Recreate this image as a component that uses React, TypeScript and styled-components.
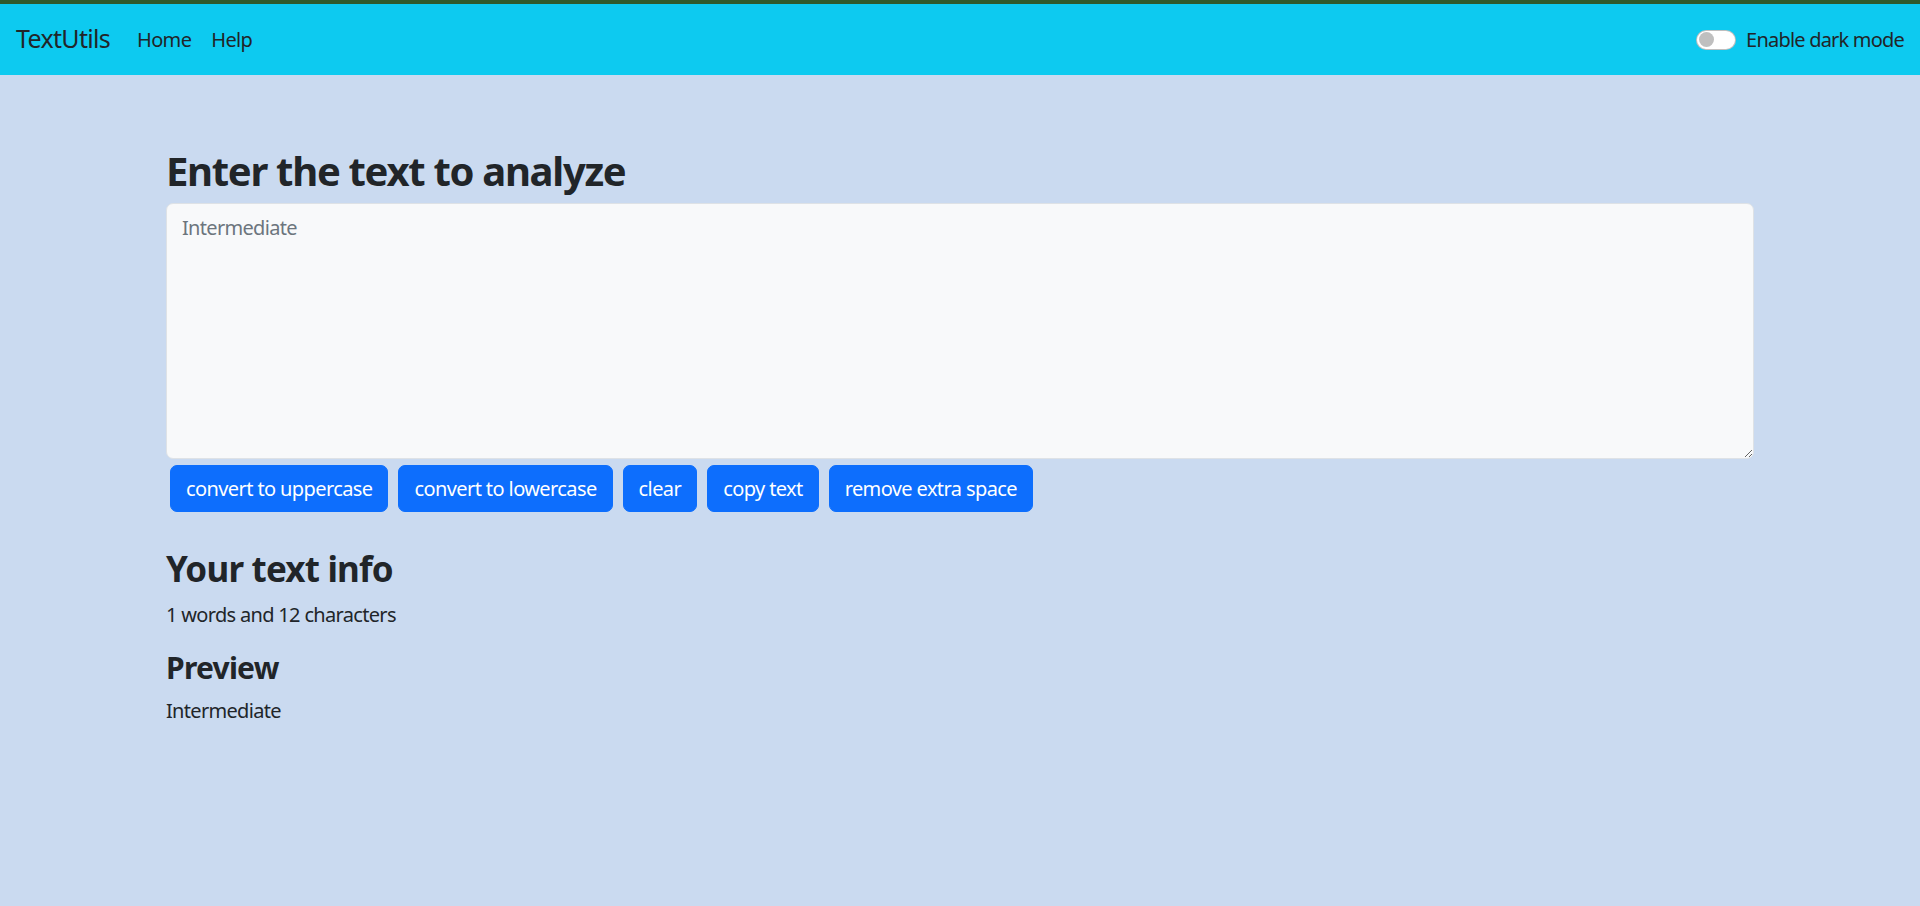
import React, { useState } from 'react';
import styled, { createGlobalStyle } from 'styled-components';

const GlobalStyle = createGlobalStyle`
  html, body {
    margin: 0;
    padding: 0;
  }

  body {
    background-color: #cadaf0;
    color: #212529;
    font-family: 'Noto Sans', 'Open Sans', sans-serif;
    font-size: 20px;
    line-height: 1.5;
    letter-spacing: -0.68px;
    min-height: 906px;
  }

  * {
    box-sizing: border-box;
  }
`;

const actions = [
  'convert to uppercase',
  'convert to lowercase',
  'clear',
  'copy text',
  'remove extra space',
];

const App: React.FC = () => {
  const [text, setText] = useState('Intermediate');
  const words = text.split(/\s+/).filter((w) => w.length > 0).length;

  return (
    <>
      <GlobalStyle />
      <TopStrip />
      <Navbar>
        <Brand href="#">TextUtils</Brand>
        <NavLinks>
          <NavLink href="#">Home</NavLink>
          <NavLink href="#">Help</NavLink>
        </NavLinks>
        <Switch>
          <SwitchTrack>
            <SwitchKnob />
          </SwitchTrack>
          <SwitchLabel>Enable dark mode</SwitchLabel>
        </Switch>
      </Navbar>

      <Container>
        <Title>Enter the text to analyze</Title>
        <TextBox
          rows={8}
          value={text}
          onChange={(e) => setText(e.target.value)}
        />
        <ButtonRow>
          {actions.map((label) => (
            <ActionButton key={label}>{label}</ActionButton>
          ))}
        </ButtonRow>

        <Summary>
          <SubTitle>Your text info</SubTitle>
          <Paragraph>
            {words} words and {text.length} characters
          </Paragraph>
          <SmallTitle>Preview</SmallTitle>
          <Paragraph>{text}</Paragraph>
        </Summary>
      </Container>
    </>
  );
};

const TopStrip = styled.div`
  height: 4px;
  background-color: #2f5a2c;
`;

const Navbar = styled.nav`
  display: flex;
  align-items: center;
  height: 71px;
  padding: 0 16px;
  background-color: #0dcaf0;
`;

const Brand = styled.a`
  font-size: 25px;
  color: #212529;
  text-decoration: none;
  margin-right: 27px;
  margin-top: -2px;
`;

const NavLinks = styled.div`
  display: flex;
  gap: 20px;
  flex: 1;
`;

const NavLink = styled.a`
  font-size: 20px;
  color: #212529;
  text-decoration: none;
`;

const Switch = styled.div`
  display: flex;
  align-items: center;
  gap: 10px;
`;

const SwitchTrack = styled.div`
  width: 40px;
  height: 20px;
  border-radius: 10px;
  border: 1px solid rgba(0, 0, 0, 0.25);
  background-color: #fff;
  display: flex;
  align-items: center;
  padding-left: 2px;
`;

const SwitchKnob = styled.span`
  width: 15px;
  height: 15px;
  border-radius: 50%;
  background-color: #bfbfbf;
`;

const SwitchLabel = styled.label`
  font-size: 20px;
  color: #212529;
  letter-spacing: -0.8px;
`;

const Container = styled.main`
  padding: 51px 166px 0;
  display: flex;
  flex-direction: column;
`;

const Title = styled.h2`
  font-size: 40px;
  font-weight: 700;
  line-height: 1.2;
  letter-spacing: -1.3px;
  margin: 21px 0 8px;
`;

const TextBox = styled.textarea`
  display: block;
  width: 1588px;
  height: 256px;
  padding: 9px 15px 7px;
  font-family: inherit;
  font-size: 20px;
  line-height: 1.5;
  letter-spacing: inherit;
  color: #6c757d;
  background-color: #f8f9fa;
  border: 1px solid #dee2e6;
  border-radius: 7px;
  outline: none;
  resize: vertical;
`;

const ButtonRow = styled.div`
  display: flex;
  gap: 10px;
  margin: 6px 0 0 4px;
`;

const ActionButton = styled.button`
  height: 47px;
  padding: 0 15px;
  border: 1px solid #0d6efd;
  border-radius: 7px;
  background-color: #0d6efd;
  color: #fff;
  font-family: inherit;
  font-size: 20px;
  letter-spacing: -0.6px;
  cursor: pointer;
`;

const Summary = styled.section`
  margin-top: 36px;
`;

const SubTitle = styled.h3`
  font-size: 35px;
  font-weight: 700;
  line-height: 1.2;
  letter-spacing: -0.8px;
  margin: 0 0 10px;
`;

const SmallTitle = styled.h4`
  font-size: 30px;
  font-weight: 700;
  line-height: 1.2;
  letter-spacing: -0.75px;
  margin: 0 0 10px;
`;

const Paragraph = styled.p`
  margin: 0 0 20px;
`;

export default App;
